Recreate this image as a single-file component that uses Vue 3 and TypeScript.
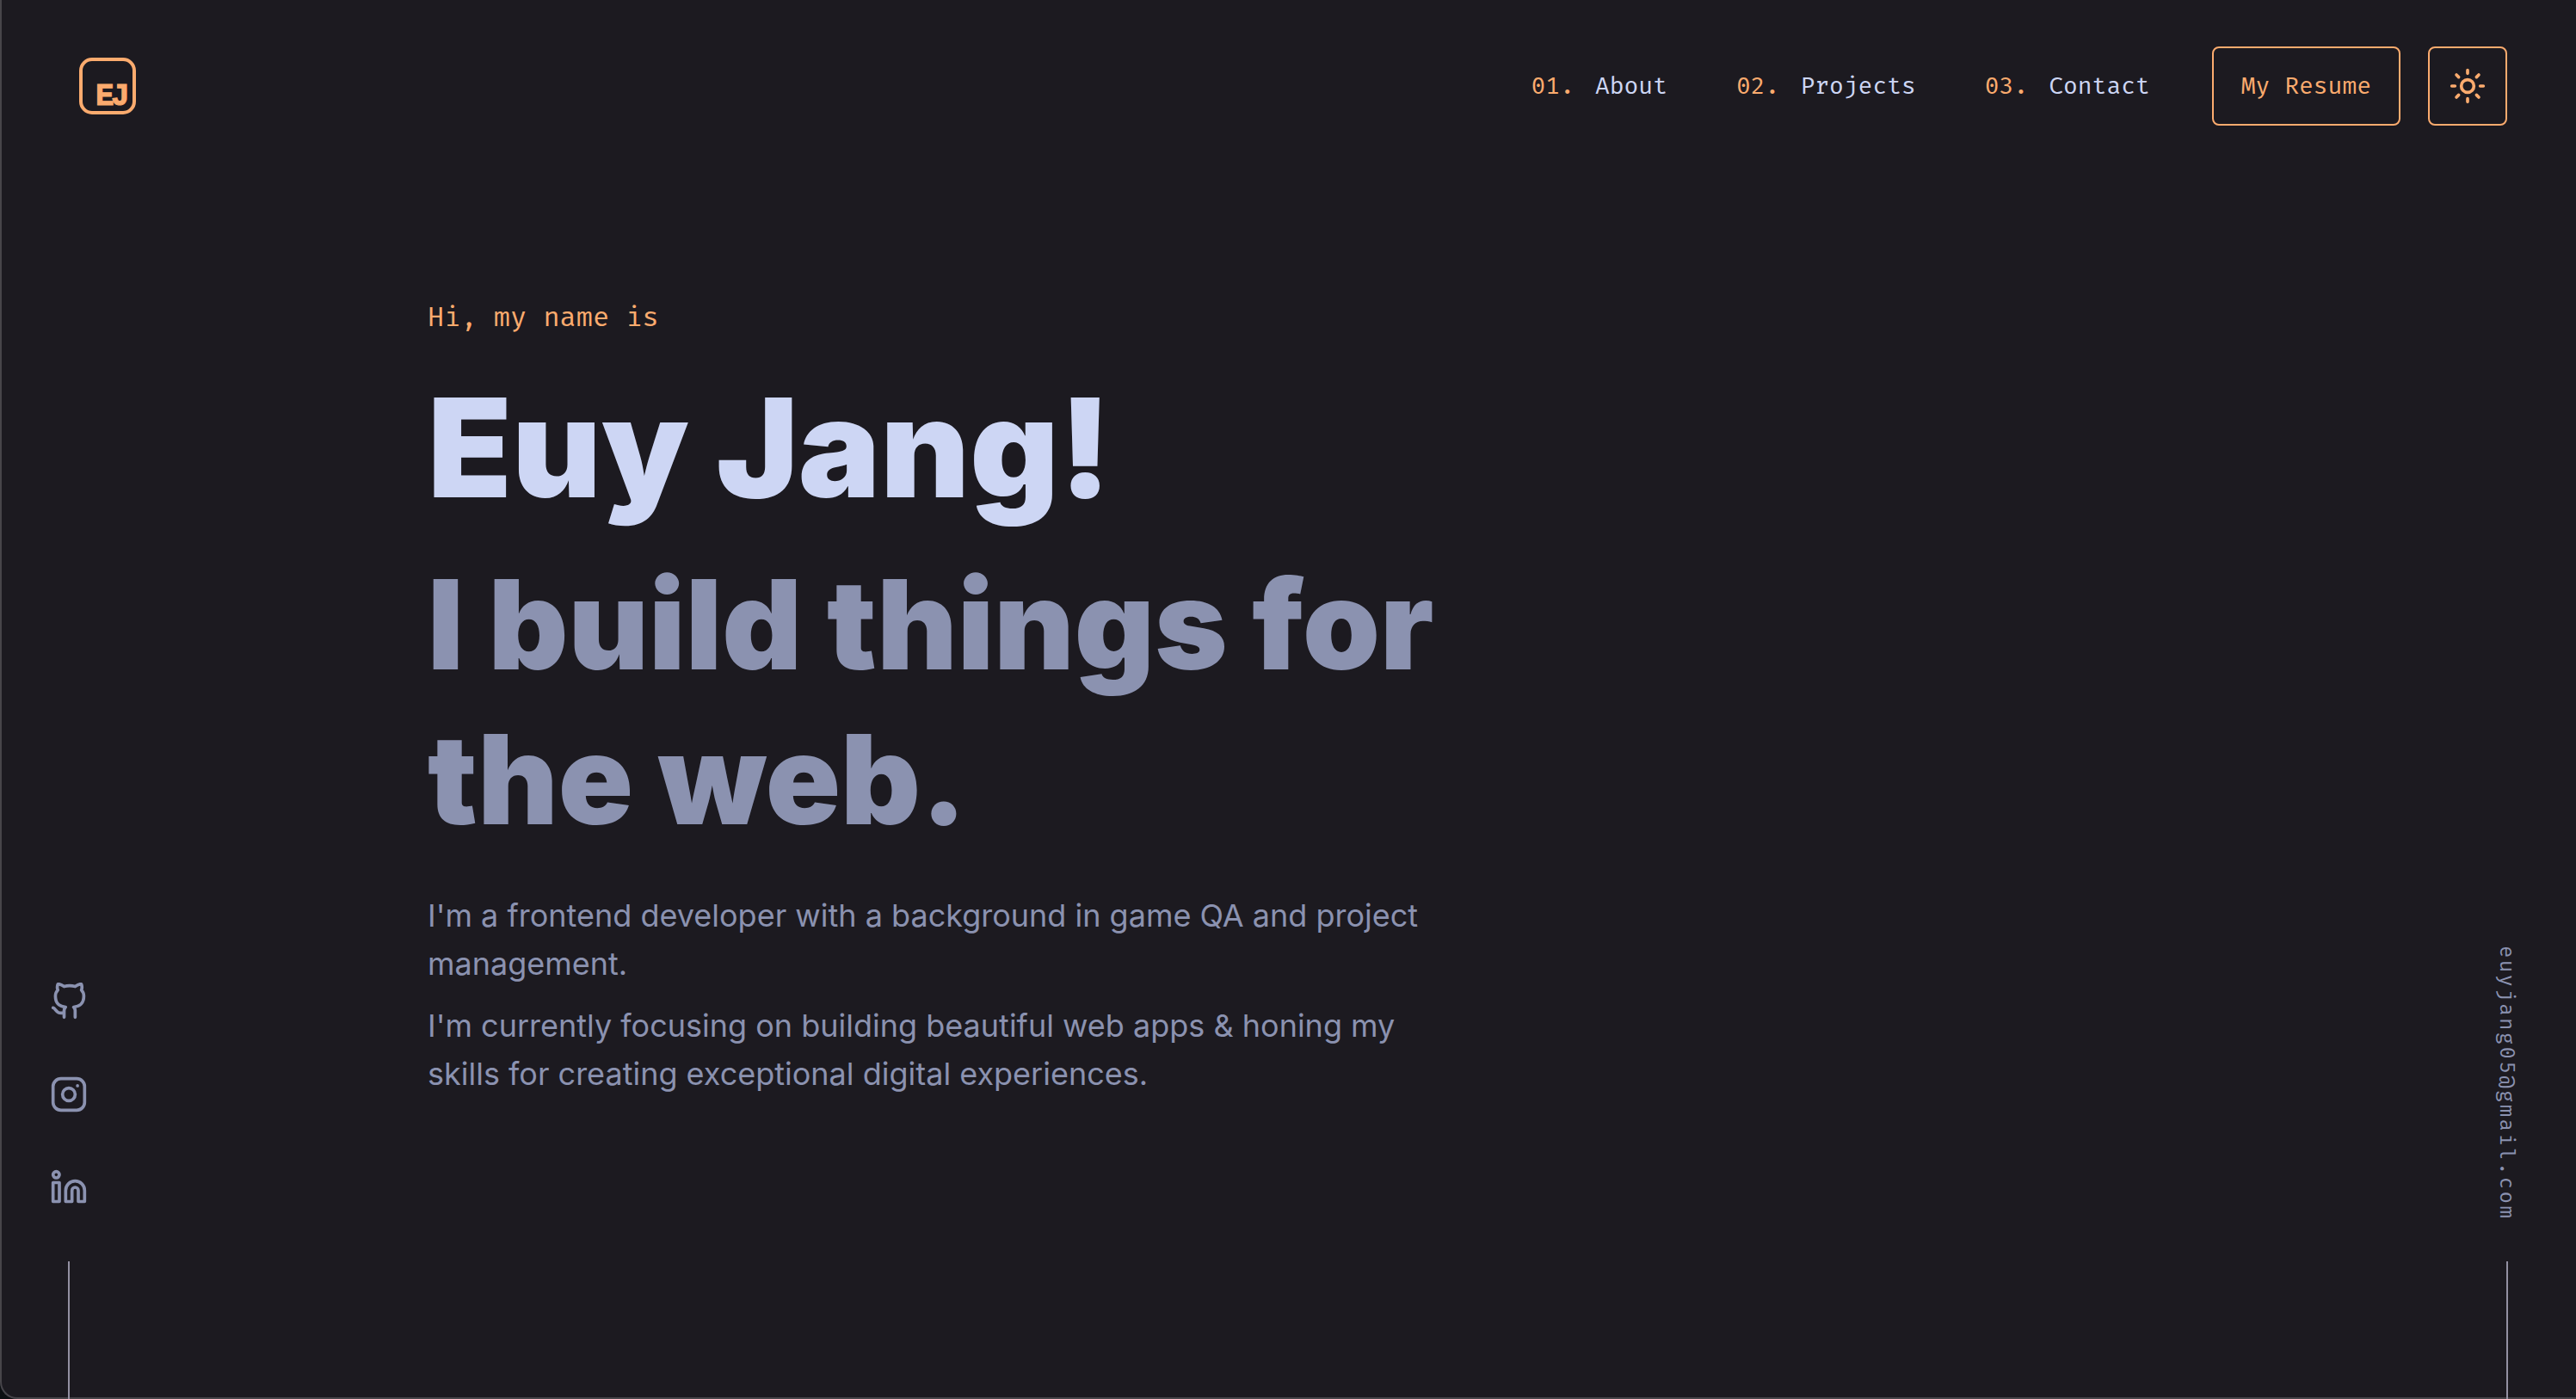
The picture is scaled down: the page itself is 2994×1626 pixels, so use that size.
<script setup lang="ts">
interface NavLink {
  index: string
  label: string
  href: string
}

const links: NavLink[] = [
  { index: '01.', label: 'About', href: '#about' },
  { index: '02.', label: 'Projects', href: '#projects' },
  { index: '03.', label: 'Contact', href: '#contact' },
]

const email = 'euyjang05@gmail.com'
</script>

<template>
  <div class="page">
    <header class="header">
      <a class="logo" href="#home" aria-label="Home">
        <svg viewBox="0 0 66 66" width="66" height="66" aria-hidden="true">
          <rect x="2" y="2" width="62" height="62" rx="13" fill="none" stroke="currentColor" stroke-width="4" />
          <text class="initials" y="55"><tspan x="19">E</tspan><tspan x="37">J</tspan></text>
        </svg>
      </a>
      <div class="actions">
        <nav class="nav">
          <a v-for="link in links" :key="link.href" class="nav-link" :href="link.href">
            <span class="nav-index">{{ link.index }}</span>
            <span>{{ link.label }}</span>
          </a>
        </nav>
        <a class="button resume" href="#resume">My Resume</a>
        <button class="button toggle" type="button" aria-label="Switch to light theme">
          <svg class="icon" viewBox="0 0 24 24" aria-hidden="true">
            <circle cx="12" cy="12" r="4" />
            <path d="M12 2v2M12 20v2M4.93 4.93l1.41 1.41M17.66 17.66l1.41 1.41M2 12h2M20 12h2M6.34 17.66l-1.41 1.41M19.07 4.93l-1.41 1.41" />
          </svg>
        </button>
      </div>
    </header>

    <div class="body">
      <aside class="rail">
        <div class="socials">
          <a href="#github" aria-label="GitHub">
            <svg class="icon" viewBox="0 0 24 24" aria-hidden="true">
              <path d="M9 19c-5 1.5-5-2.5-7-3m14 6v-3.87a3.37 3.37 0 0 0-.94-2.61c3.14-.35 6.44-1.54 6.44-7A5.44 5.44 0 0 0 20 4.77 5.07 5.07 0 0 0 19.91 1S18.73.65 16 2.48a13.38 13.38 0 0 0-7 0C6.27.65 5.09 1 5.09 1A5.07 5.07 0 0 0 5 4.77a5.44 5.44 0 0 0-1.5 3.78c0 5.42 3.3 6.61 6.44 7A3.37 3.37 0 0 0 9 18.13V22" />
            </svg>
          </a>
          <a href="#instagram" aria-label="Instagram">
            <svg class="icon" viewBox="0 0 24 24" aria-hidden="true">
              <rect x="2" y="2" width="20" height="20" rx="5" />
              <circle cx="12" cy="12" r="4" />
              <path d="M17.5 6.5h.01" />
            </svg>
          </a>
          <a href="#linkedin" aria-label="LinkedIn">
            <svg class="icon" viewBox="0 0 24 24" aria-hidden="true">
              <path d="M16 8a6 6 0 0 1 6 6v7h-4v-7a2 2 0 0 0-4 0v7h-4v-7a6 6 0 0 1 6-6z" />
              <rect x="2" y="9" width="4" height="12" />
              <circle cx="4" cy="4" r="2" />
            </svg>
          </a>
        </div>
        <span class="line"></span>
      </aside>

      <main class="hero">
        <div class="intro">
          <p class="greeting">Hi, my name is</p>
          <h1 class="name">Euy Jang!</h1>
          <h2 class="tagline">I build things for the web.</h2>
          <div class="bio">
            <p>I'm a frontend developer with a background in game QA and project management.</p>
            <p>I'm currently focusing on building beautiful web apps &amp; honing my skills for creating exceptional digital experiences.</p>
          </div>
        </div>
      </main>

      <aside class="rail">
        <a class="email" :href="`mailto:${email}`">{{ email }}</a>
        <span class="line"></span>
      </aside>
    </div>
  </div>
</template>

<style>
body {
  margin: 0;
  background: #0d1013;
}
</style>

<style scoped>
.page {
  --orange: #fbab6e;
  --light: #cdd6f4;
  --muted: #8b92b0;
  --mono: 'Fira Mono', 'Fira Code', 'DejaVu Sans Mono', monospace;
  position: relative;
  display: flex;
  flex-direction: column;
  min-height: 100vh;
  border-bottom-left-radius: 20px;
  background: #1c1a20;
  color: var(--muted);
  font-family: Inter, sans-serif;
}

.page::after {
  content: '';
  position: absolute;
  inset: 0;
  border: solid #47454a;
  border-width: 0 0 2px 2px;
  border-bottom-left-radius: 20px;
  pointer-events: none;
}

a {
  color: inherit;
  text-decoration: none;
}

p,
h1,
h2 {
  margin: 0;
}

.icon {
  display: block;
  width: 44px;
  height: 44px;
  fill: none;
  stroke: currentColor;
  stroke-width: 2;
  stroke-linecap: round;
  stroke-linejoin: round;
}

.header {
  display: flex;
  align-items: center;
  justify-content: space-between;
  padding: 54px 80px 54px 92px;
  font-family: var(--mono);
  font-size: 28px;
  line-height: 40px;
}

.logo {
  color: var(--orange);
}

.logo svg {
  display: block;
}

.initials {
  fill: currentColor;
  stroke: currentColor;
  stroke-width: 1px;
  font-family: 'Liberation Mono', monospace;
  font-size: 36px;
  font-weight: 700;
}

.actions {
  display: flex;
  align-items: center;
  gap: 32px;
}

.nav {
  display: flex;
  gap: 80px;
  margin-right: 40px;
}

.nav-link {
  display: flex;
  gap: 24px;
  color: var(--light);
}

.nav-index {
  color: var(--orange);
}

.button {
  display: flex;
  align-items: center;
  justify-content: center;
  box-sizing: border-box;
  height: 92px;
  border: 2px solid var(--orange);
  border-radius: 8px;
  background: transparent;
  color: var(--orange);
}

.resume {
  padding: 0 32px;
}

.toggle {
  width: 92px;
  padding: 0;
}

.body {
  display: grid;
  flex: 1;
  grid-template-columns: 160px minmax(0, 1fr) 160px;
}

.rail {
  position: relative;
  z-index: 1;
  display: flex;
  flex-direction: column;
  align-items: center;
  justify-content: flex-end;
}

.socials {
  display: flex;
  flex-direction: column;
  gap: 64px;
  margin-bottom: 64px;
}

.line {
  width: 2px;
  height: 160px;
  background: #9390a2;
}

.email {
  margin-bottom: 48px;
  font-family: var(--mono);
  font-size: 24px;
  line-height: 32px;
  letter-spacing: 0.1em;
  writing-mode: vertical-rl;
}

.hero {
  display: flex;
  justify-content: center;
  padding: 144px 0 160px;
}

.intro {
  width: 100%;
  max-width: 2000px;
}

.greeting {
  margin-bottom: 28px;
  color: var(--orange);
  font-family: var(--mono);
  font-size: 32px;
  line-height: 48px;
}

.name {
  margin-bottom: 16px;
  color: var(--light);
  font-size: 160px;
  font-weight: 900;
  line-height: 200px;
}

.tagline {
  max-width: 1200px;
  font-size: 144px;
  font-weight: 900;
  line-height: 180px;
}

.bio {
  display: flex;
  flex-direction: column;
  gap: 16px;
  max-width: 1200px;
  margin-top: 40px;
  font-size: 36px;
  line-height: 56px;
}
</style>
